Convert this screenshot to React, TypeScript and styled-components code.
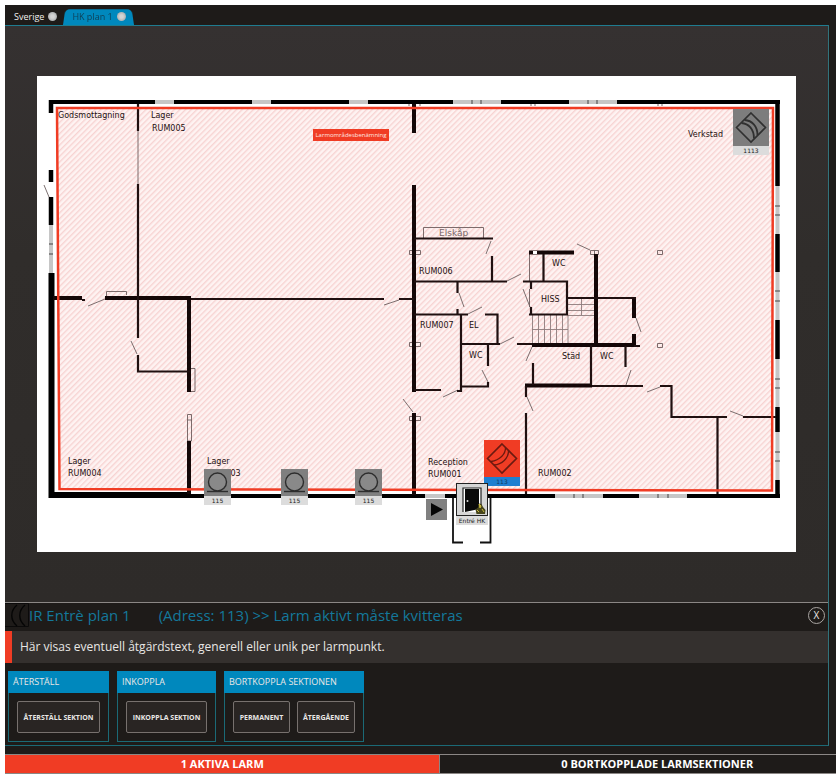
import React from "react";
import styled, { createGlobalStyle, css } from "styled-components";

const UI_FONT = '"Open Sans", "Noto Sans", sans-serif';
const PLAN_FONT = '"DejaVu Sans", sans-serif';

const PLAN = { x: 37, y: 76, width: 759, height: 476 };

const colors = {
  ink: "#1e1b19",
  surface: "#34302e",
  blue: "#0088bd",
  teal: "#1b6a76",
  red: "#f03c24",
  text: "#e9e7e5",
};

const GlobalStyle = createGlobalStyle`
  * { box-sizing: border-box; }
  body { margin: 0; background: #fff; font-family: ${UI_FONT}; }
  button { font: inherit; color: inherit; padding: 0; border: 0; background: none; cursor: pointer; }
`;

const Shell = styled.div`
  min-height: 100vh;
  padding: 5px 0 0 5px;
  display: flex;
`;

const Window = styled.div`
  flex: 1;
  min-width: 0;
  display: flex;
  flex-direction: column;
  background: ${colors.ink};
  color: ${colors.text};
`;

const TabBar = styled.nav`
  display: flex;
  align-items: flex-end;
  gap: 2px;
  height: 20px;
  padding-left: 2px;
`;

const Tab = styled.div<{ $active?: boolean }>`
  position: relative;
  display: flex;
  align-items: center;
  gap: 4px;
  height: 17px;
  padding: 0 4px 0 7px;
  font-size: 9px;
  color: #f2f0ee;
  ${(p) =>
    p.$active
      ? css`
          padding: 0 9px;
          color: #0d4259;
          &::before {
            content: "";
            position: absolute;
            inset: 0;
            background: ${colors.blue};
            border-radius: 5px 5px 0 0;
            transform: perspective(30px) rotateX(7deg);
            transform-origin: bottom;
          }
        `
      : ""}
`;

const TabName = styled.button`
  position: relative;
  line-height: 16px;
`;

const TabDot = styled.button`
  position: relative;
  width: 9px;
  height: 9px;
  border-radius: 50%;
  background: radial-gradient(#d4d4d4 25%, #979b9d);
`;

const Workspace = styled.main`
  flex: 1;
  display: flex;
  flex-direction: column;
  margin-right: 7px;
  border-top: 1px solid #1f7c90;
  border-right: 1px solid #31737c;
  border-bottom: 1px solid ${colors.teal};
`;

const Viewport = styled.section`
  flex: 1;
  display: flex;
  align-items: center;
  padding: 32px;
  background: linear-gradient(#353131, #302d2b 40%, #2e2b29);
  border-bottom: 1px solid #8b8785;
`;

const PlanSheet = styled.div`
  position: relative;
  flex: 1;
  background: #fff;
`;

const PlanDrawing = styled.svg`
  display: block;
  width: 100%;
  height: auto;
`;

const Marker = styled.button<{ $x: number; $y: number; $w: number }>`
  position: absolute;
  left: ${(p) => ((p.$x - PLAN.x) / PLAN.width) * 100}%;
  top: ${(p) => ((p.$y - PLAN.y) / PLAN.height) * 100}%;
  width: ${(p) => p.$w}px;
  display: flex;
  flex-direction: column;
  color: #2b2b2b;
  svg { display: block; width: 100%; }
`;

const MarkerTag = styled.span<{ $alarm?: boolean }>`
  height: 9px;
  font: 6px/9px ${PLAN_FONT};
  text-align: center;
  white-space: nowrap;
  color: ${(p) => (p.$alarm ? "#123a63" : "#222")};
  background: ${(p) => (p.$alarm ? "#1f7fd0" : "#dcdcdc")};
`;

const ZoneTag = styled.button<{ $x: number; $y: number }>`
  position: absolute;
  left: ${(p) => ((p.$x - PLAN.x) / PLAN.width) * 100}%;
  top: ${(p) => ((p.$y - PLAN.y) / PLAN.height) * 100}%;
  width: 76px;
  height: 12px;
  font-size: 6px;
  line-height: 12px;
  text-align: center;
  white-space: nowrap;
  color: #ffe6e0;
  background: ${colors.red};
`;

const AlarmPanel = styled.section`
  display: flex;
  flex-direction: column;
  height: 142px;
`;

const PanelHeader = styled.header`
  display: flex;
  align-items: center;
  height: 28px;
  padding-right: 3px;
`;

const DetectorGlyph = styled.svg`
  width: 24px;
  height: 24px;
  align-self: flex-start;
`;

const PanelTitle = styled.h1`
  flex: 1;
  display: flex;
  gap: 28px;
  margin: 0;
  padding-bottom: 5px;
  font-size: 15px;
  font-weight: 400;
  line-height: 20px;
  color: #14789b;
`;

const CloseButton = styled.button`
  width: 17px;
  height: 17px;
  margin-bottom: 4px;
  border: 1px solid #aaa6a3;
  border-radius: 50%;
  font-size: 10px;
  line-height: 14px;
`;

const Instruction = styled.p`
  margin: 0 0 8px;
  padding-left: 8px;
  border-left: 7px solid ${colors.red};
  background: ${colors.surface};
  font-size: 12px;
  line-height: 32px;
`;

const Groups = styled.div`
  display: flex;
  gap: 8px;
  padding-left: 3px;
`;

const Group = styled.section`
  border: 1px solid ${colors.teal};
`;

const GroupTitle = styled.h2`
  margin: -1px -1px 0;
  padding: 0 5px;
  height: 22px;
  font-size: 9px;
  font-weight: 400;
  line-height: 22px;
  background: ${colors.blue};
`;

const GroupBody = styled.div`
  display: flex;
  gap: 7px;
  padding: 8px;
`;

const ActionButton = styled.button<{ $w: number }>`
  width: ${(p) => p.$w}px;
  height: 32px;
  border: 1px solid #77716e;
  border-radius: 2px;
  background: #292523;
  font-size: 7px;
  font-weight: 700;
  white-space: nowrap;
`;

const StatusBar = styled.footer`
  display: flex;
  height: 20px;
  margin-top: 8px;
  border-top: 1px solid #8b8785;
  border-bottom: 1px solid #8b8785;
`;

const Status = styled.button<{ $alarm?: boolean }>`
  flex: ${(p) => (p.$alarm ? "435 1 0" : "358 1 0")};
  padding-left: ${(p) => (p.$alarm ? 0 : 38)}px;
  font-size: 11px;
  font-weight: 700;
  line-height: 18px;
  white-space: nowrap;
  color: #fff;
  background: ${(p) => (p.$alarm ? colors.red : colors.ink)};
  border-right: ${(p) => (p.$alarm ? "1px solid #8b8785" : "0")};
`;

/* Structural walls, grouped by line weight. */
const outerWalls =
  "M49 102H155M174 102H252M271 102H349M368 102H453M501 102H569M617 102H780" +
  "M191 496H425M445 496H555M603 496H639M687 496H780";
const outerWallsVertical =
  "M51 100V113M51 170V182M51 197V225M777.5 100V186M777.5 234V272M777.5 320V359M777.5 407V432M777.5 480V498";
const windows =
  "M155 102H174M252 102H271M349 102H368M453 102H501M569 102H617M425 496H445M555 496H603M639 496H687" +
  "M51 225V273M777.5 186V234M777.5 272V320M777.5 359V407M777.5 432V480";
const windowTicks =
  "M472 100V104M481 100V104M588 100V104M597 100V104M574 494V498M583 494V498M658 494V498M668 494V498" +
  "M49 244H53M49 254H53M775 206H780M775 215H780M775 291H780M775 301H780M775 379H780M775 388H780M775 452H780M775 461H780";
const thickWalls =
  "M53 298H82M105 298H191M189 296V392M189 441V494M414 104V133M414 185V392M414 413V495" +
  "M529 252.5H574M596 254V345M532 345H636M634 297V318M634 334V345M525 385.5H592";
const innerWalls =
  "M138 104V131M138 184V338M138 355V371.5H190M82 300H85M191 299H384M399 299H414" +
  "M414 238.5H493M492 256V281.5M414 281.5H507M523 281.5H567V314.5H529M457.500 281V293M457.500 309V314" +
  "M414 314.5H468M485 314.5H497.500V344M461 314V391H457M461 344H500M517 344H532M488 344V366M488 382V386.500H461" +
  "M414 390H441M543.500 254V281M531 281V289M531 307V314M567 298H636M634 346H640" +
  "M533 363V385M591 345V385M625.500 346V367M592 386H643M526 386V397M526 413V494" +
  "M660 386H671.500V417H727M743 417H776M717.500 417V494";
const entranceWalls = "M453 498V542.500H463M490.500 498V542.500H480";
const doorSwings =
  "M44 185L49 197M88 306L105 299M131 341L137 354M384 305L399 300M403 399L413 412M491 241L486 254" +
  "M507 281L521 274M459 293L464 307M468 314L482 307M500 344L514 337M482 370L488 382M443 397L458 390" +
  "M577 244L590 250M523 289L530 307M636 318L641 332M532 347L526 361M631 370L626 385M527 397L533 411" +
  "M647 392L660 387M730 411L743 416";
const fixtures =
  "M138 131V184M106.500 296V291.500H126.500V295M191 368.500H195V391.500H191M187.500 414.500H191.500V441H187.500ZM187.500 420H191.500" +
  "M423.500 238V227.500H483.500V238M409.500 250.500H420.500V254.500H409.500ZM409.500 342.500H420.500V346.500H409.500ZM409.500 416.500H420.500V420.500H409.500Z" +
  "M590.500 250.500H598.500V254.500H590.500ZM594.500 250.500V254.500M657.500 250.500H662.500V254.500H657.500ZM657.500 343.500H662.500V347.500H657.500Z" +
  "M529.500 254V281M529.500 289V307M409 106V104M420 106V104M531 106V104M535 106V104M658 106V104M662 106V104";
const stairs =
  "M532.500 315V343M538.500 315V343M544.500 315V343M550.500 315V343M556.500 315V343M562.500 315V343M568 315V343M532 329.500H568" +
  "M568 304.500H594M568 310.500H594M568 315.500H594M581.500 298V315";

const roomLabels: { x: number; y: number; text: string }[] = [
  { x: 58, y: 118, text: "Godsmottagning" },
  { x: 151, y: 118, text: "Lager" },
  { x: 152, y: 131, text: "RUM005" },
  { x: 688, y: 137, text: "Verkstad" },
  { x: 419, y: 274, text: "RUM006" },
  { x: 552, y: 266, text: "WC" },
  { x: 541, y: 302, text: "HISS" },
  { x: 420, y: 328, text: "RUM007" },
  { x: 469, y: 328, text: "EL" },
  { x: 469, y: 358, text: "WC" },
  { x: 562, y: 359, text: "Städ" },
  { x: 600, y: 359, text: "WC" },
  { x: 68, y: 464, text: "Lager" },
  { x: 68, y: 476, text: "RUM004" },
  { x: 207, y: 464, text: "Lager" },
  { x: 207, y: 476, text: "RUM003" },
  { x: 428, y: 465, text: "Reception" },
  { x: 428, y: 477, text: "RUM001" },
  { x: 538, y: 476, text: "RUM002" },
];

const zoneOutline = "M57 108H773L772 490.500L59.500 489Z";

function FloorPlan() {
  return (
    <PlanDrawing
      viewBox={`${PLAN.x} ${PLAN.y} ${PLAN.width} ${PLAN.height}`}
      role="img"
      aria-label="HK plan 1"
      fill="none"
    >
      <defs>
        <pattern id="hatch" width="4" height="4" patternUnits="userSpaceOnUse" patternTransform="rotate(45)">
          <rect width="4" height="4" fill="#fef3f2" />
          <rect width="1.400" height="4" fill="#f7d3d2" />
        </pattern>
      </defs>
      <path d={zoneOutline} fill="url(#hatch)" />
      <path d={windows} stroke="#c6c6c6" strokeWidth="4" />
      <path d={windowTicks} stroke="#444" />
      <path d={outerWalls} stroke="#000" strokeWidth="4" />
      <path d={outerWallsVertical} stroke="#000" strokeWidth="4.500" />
      <path d="M51.500 273V495H191" stroke="#000" strokeWidth="6" />
      <path d={fixtures} stroke="#6d5c5c" strokeWidth="0.900" />
      <path d={stairs} stroke="#8d7c7c" strokeWidth="0.900" />
      <path d={doorSwings} stroke="#6d6060" strokeWidth="0.900" />
      <path d={thickWalls} stroke="#140707" strokeWidth="4" />
      <path d={innerWalls} stroke="#1f1010" strokeWidth="2.200" />
      <path d={entranceWalls} stroke="#111" strokeWidth="1.800" />
      <rect x="533" y="251" width="4" height="3" fill="#fff" />
      <path d={zoneOutline} stroke={colors.red} strokeWidth="2.500" />
      <g fill="#1d0f0f" fontFamily={PLAN_FONT} fontSize="8">
        {roomLabels.map((l) => (
          <text key={`${l.x}-${l.y}`} x={l.x} y={l.y}>
            {l.text}
          </text>
        ))}
      </g>
      <text x="439" y="236" fill="#776666" fontFamily={PLAN_FONT} fontSize="9">
        Elskåp
      </text>
    </PlanDrawing>
  );
}

function MotionIcon({ alarm }: { alarm?: boolean }) {
  const stroke = alarm ? "#6b1a10" : "#303030";
  return (
    <svg viewBox="0 0 36 37" fill="none" stroke={stroke} strokeWidth="1.300">
      <rect width="36" height="37" fill={alarm ? colors.red : "#7d7d7d"} stroke="none" />
      <path d="M18 4L32.500 18.500L18 33L3.500 18.500Z" strokeWidth="1.600" />
      {alarm ? (
        <path d="M21.500 8C21.500 14 16 20 7 21.500M24.500 11C24.500 18 18 24.500 10 25" />
      ) : (
        <path d="M11.500 11C19 11.500 24.500 17 24.500 26M8.500 14C15.500 14.500 21 20 21 29.500" strokeWidth="1.800" />
      )}
    </svg>
  );
}

function SounderIcon() {
  return (
    <svg viewBox="0 0 27 27" fill="none" stroke="#2d2d2d" strokeWidth="1.400">
      <rect width="27" height="27" fill="#7f7f7f" stroke="none" />
      <circle cx="13.500" cy="13" r="9" fill="#898989" />
      <path d="M3 22.500H24" />
    </svg>
  );
}

function DoorIcon() {
  return (
    <svg viewBox="0 0 32 33" fill="none">
      <rect x="0.500" y="0.500" width="31" height="32" fill="#d6d6d6" stroke="#222" />
      <path d="M7 29V5H25V29" fill="#fff" stroke="#222" strokeWidth="1.200" />
      <path d="M9 6H23V26L9 29Z" fill="#090909" />
      <circle cx="11.500" cy="18" r="1" fill="#ddd" />
      <path d="M20.500 31L19.500 26.500L22 24.500L23 20.500L25.500 21L27 24L29.500 27L29 31Z" fill="#47451b" />
      <path d="M23 21L25 23L24 25ZM21 27L23 29M26 26L28 29" fill="#d8c848" stroke="#c9b93e" />
    </svg>
  );
}

function PlayIcon() {
  return (
    <svg viewBox="0 0 21 21">
      <rect width="21" height="21" fill="#808080" />
      <path d="M5 4L17 10.500L5 17Z" fill="#050505" />
    </svg>
  );
}

const sounders = [204, 281, 355];

export default function App() {
  return (
    <Shell>
      <GlobalStyle />
      <Window>
        <TabBar>
          <Tab>
            <TabName>Sverige</TabName>
            <TabDot aria-label="Stäng Sverige" />
          </Tab>
          <Tab $active>
            <TabName>HK plan 1</TabName>
            <TabDot aria-label="Stäng HK plan 1" />
          </Tab>
        </TabBar>
        <Workspace>
          <Viewport>
            <PlanSheet>
              <FloorPlan />
              <ZoneTag $x={313} $y={129}>Larmområdesbenämning</ZoneTag>
              <Marker $x={733} $y={109} $w={36}>
                <MotionIcon />
                <MarkerTag>1113</MarkerTag>
              </Marker>
              {sounders.map((x) => (
                <Marker key={x} $x={x} $y={469} $w={27}>
                  <SounderIcon />
                  <MarkerTag>115</MarkerTag>
                </Marker>
              ))}
              <Marker $x={484} $y={440} $w={36}>
                <MotionIcon alarm />
                <MarkerTag $alarm>113</MarkerTag>
              </Marker>
              <Marker $x={426} $y={499} $w={21} aria-label="Spela upp">
                <PlayIcon />
              </Marker>
              <Marker $x={456} $y={483} $w={32}>
                <DoorIcon />
                <MarkerTag>Entré HK</MarkerTag>
              </Marker>
            </PlanSheet>
          </Viewport>
          <AlarmPanel>
            <PanelHeader>
              <DetectorGlyph viewBox="0 0 24 24" fill="none" stroke="#050505" strokeWidth="1.400" aria-hidden="true">
                <path d="M0 0.500H23.500V23.500H0" stroke="#0b0a0a" strokeWidth="1" />
                <path d="M12 2C5 8 5 17 12 23M20 2C13 8 13 17 20 23" />
              </DetectorGlyph>
              <PanelTitle>
                <span>IR Entrè plan 1</span>
                <span>(Adress: 113) &gt;&gt; Larm aktivt måste kvitteras</span>
              </PanelTitle>
              <CloseButton aria-label="Stäng">X</CloseButton>
            </PanelHeader>
            <Instruction>Här visas eventuell åtgärdstext, generell eller unik per larmpunkt.</Instruction>
            <Groups>
              <Group>
                <GroupTitle>ÅTERSTÄLL</GroupTitle>
                <GroupBody>
                  <ActionButton $w={83}>ÅTERSTÄLL SEKTION</ActionButton>
                </GroupBody>
              </Group>
              <Group>
                <GroupTitle>INKOPPLA</GroupTitle>
                <GroupBody>
                  <ActionButton $w={81}>INKOPPLA SEKTION</ActionButton>
                </GroupBody>
              </Group>
              <Group>
                <GroupTitle>BORTKOPPLA SEKTIONEN</GroupTitle>
                <GroupBody>
                  <ActionButton $w={57}>PERMANENT</ActionButton>
                  <ActionButton $w={58}>ÅTERGÅENDE</ActionButton>
                </GroupBody>
              </Group>
            </Groups>
          </AlarmPanel>
        </Workspace>
        <StatusBar>
          <Status $alarm>1 AKTIVA LARM</Status>
          <Status>0 BORTKOPPLADE LARMSEKTIONER</Status>
        </StatusBar>
      </Window>
    </Shell>
  );
}
